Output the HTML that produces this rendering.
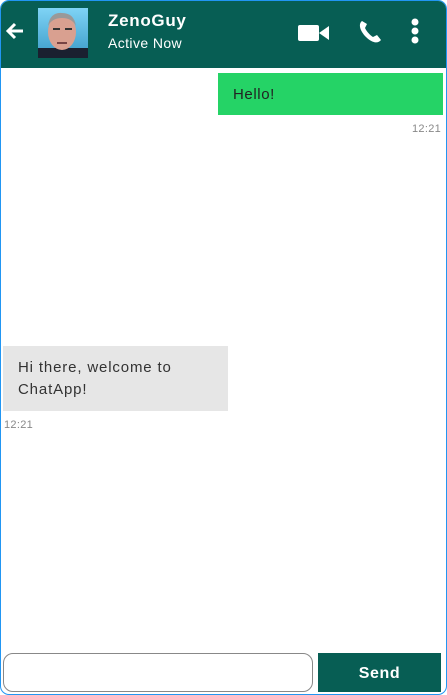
<!DOCTYPE html>
<html><head><style>
*{margin:0;padding:0;box-sizing:border-box}
body{width:447px;height:695px;background:#fff;font-family:"Liberation Sans","DejaVu Sans",sans-serif;position:relative;overflow:hidden}
.frame{position:absolute;left:0;top:0;width:447px;height:695px;border:1px solid #2196f3;border-radius:9px;overflow:hidden}
.hdr{position:absolute;left:-1px;top:-1px;width:447px;height:68px;background:#075e54}
.av{position:absolute;left:38px;top:8px;width:50px;height:50px;background:linear-gradient(#7fd3f5,#3a9ac8);overflow:hidden}
.name{position:absolute;left:108px;top:11px;color:#fff;font-weight:bold;font-size:17px;letter-spacing:0.7px}
.st{position:absolute;left:108px;top:35px;color:#fff;font-size:14px;letter-spacing:0.4px}
.b1{position:absolute;left:217px;top:72px;width:225px;height:42px;background:#25d366;color:#222;font-size:15px;padding:13px 15px;letter-spacing:0.6px}
.t{position:absolute;font-size:11px;color:#888;letter-spacing:0.3px}
.b2{position:absolute;left:2px;top:345px;width:225px;height:65px;background:#e6e6e6;color:#333;font-size:15px;line-height:22px;padding:11px 15px;letter-spacing:0.85px}
.in{position:absolute;left:2px;top:652px;width:310px;height:39px;border:1px solid #888;border-radius:10px}
.send{position:absolute;left:317px;top:652px;width:123px;height:39px;background:#075e54;color:#fff;font-weight:bold;font-size:16px;text-align:center;line-height:41px;letter-spacing:0.6px}
</style></head><body>
<div class="frame">
<div class="hdr">
<svg style="position:absolute;left:5px;top:22px" width="20" height="18" viewBox="0 0 20 18"><path d="M18 9H4M10 2L3 9l7 7" stroke="#fff" stroke-width="3" fill="none"/></svg>
<div class="av"><svg width="50" height="50" viewBox="0 0 50 50"><rect x="0" y="40" width="50" height="10" fill="#1a2030"/><ellipse cx="24" cy="24" rx="14" ry="18" fill="#d9a090"/><path d="M10 18Q12 4 24 5Q36 5 38 18Q34 10 24 10Q14 10 10 18Z" fill="#999"/><rect x="15" y="20" width="7" height="2" fill="#333"/><rect x="27" y="20" width="7" height="2" fill="#333"/><rect x="19" y="34" width="10" height="2" fill="#744"/></svg></div>
<div class="name">ZenoGuy</div>
<div class="st">Active Now</div>
<svg style="position:absolute;left:298px;top:23px" width="32" height="20" viewBox="0 0 32 20"><rect x="0" y="2" width="21" height="16" rx="2" fill="#fff"/><path d="M21 10L31 3V17Z" fill="#fff"/></svg>
<svg style="position:absolute;left:356px;top:19px" width="28" height="26" viewBox="0 0 28 26"><path d="M6 2C2 5 4 12 10 18S22 25 25 21L21 16L17 18C14 16 11 13 9 9L11 5Z" fill="#fff"/></svg>
<svg style="position:absolute;left:409px;top:18px" width="12" height="26" viewBox="0 0 12 26"><circle cx="6" cy="4" r="3.5" fill="#fff"/><circle cx="6" cy="13" r="3.5" fill="#fff"/><circle cx="6" cy="22" r="3.5" fill="#fff"/></svg>
</div>
<div class="b1">Hello!</div>
<div class="t" style="left:411px;top:122px">12:21</div>
<div class="b2">Hi there, welcome to<br>ChatApp!</div>
<div class="t" style="left:3px;top:418px">12:21</div>
<div class="in"></div>
<div class="send">Send</div>
</div>
</body></html>
